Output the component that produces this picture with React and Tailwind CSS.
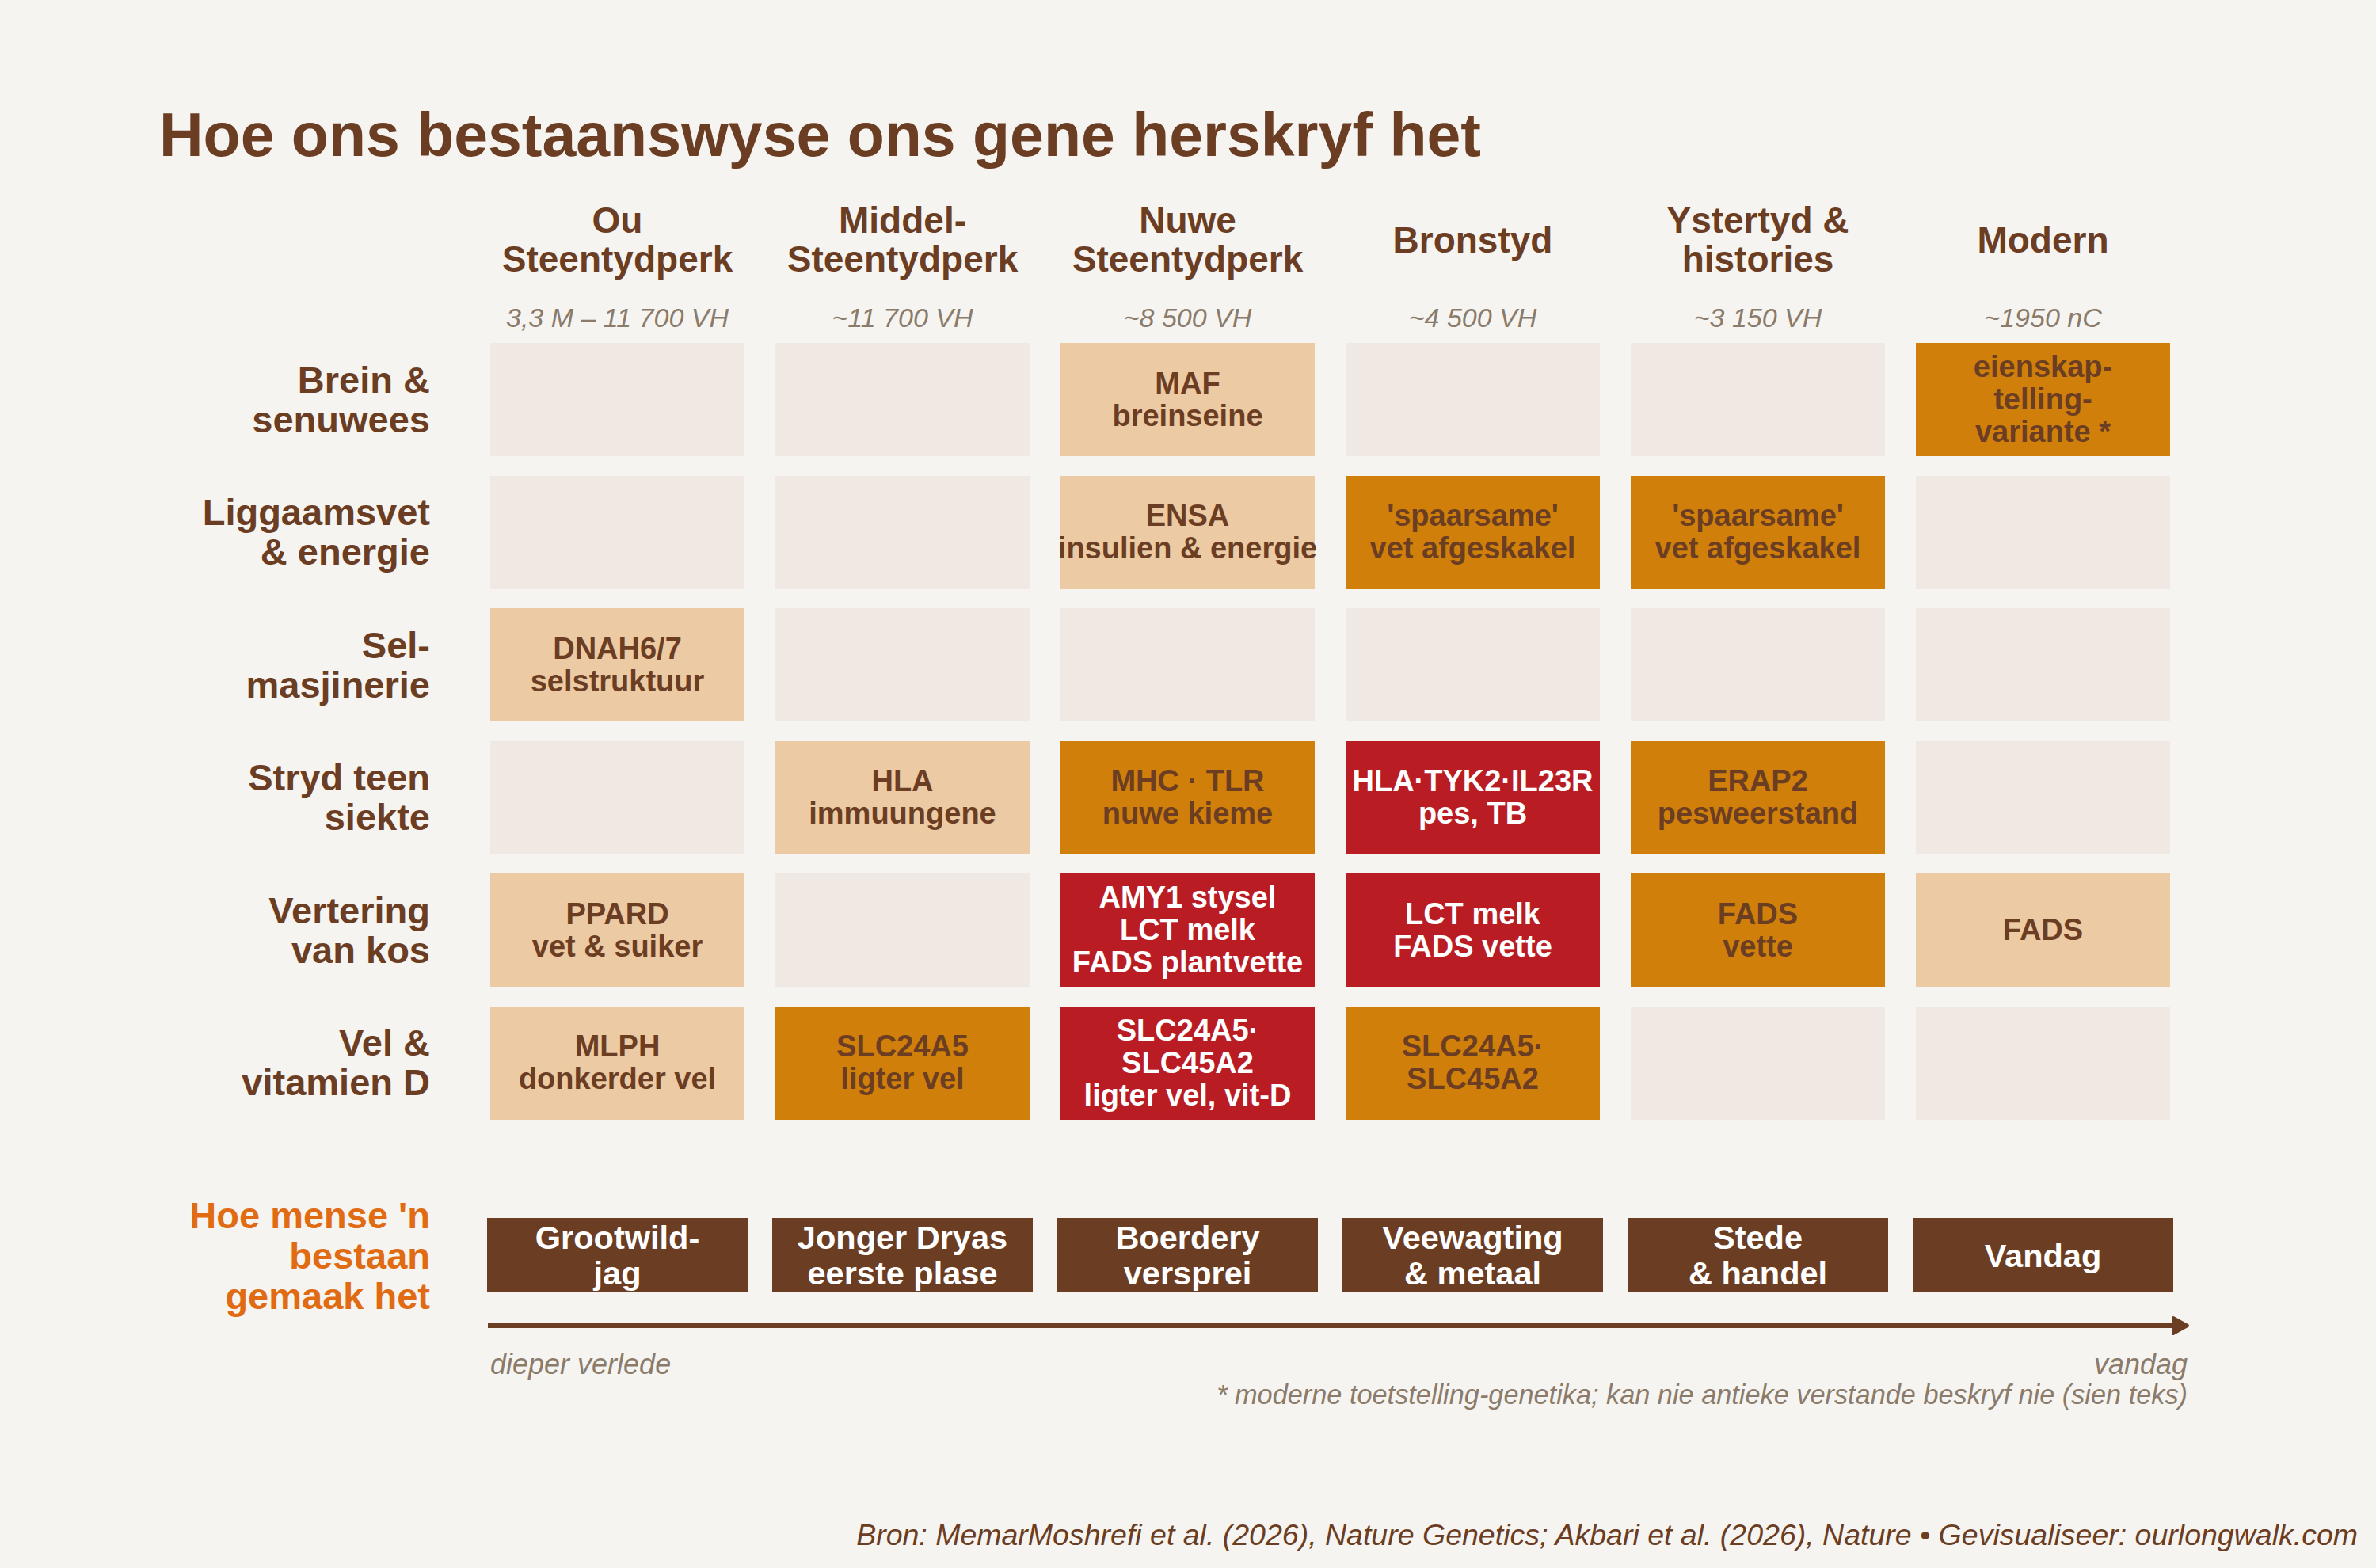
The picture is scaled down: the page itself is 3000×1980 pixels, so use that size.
const eras = [
  { name: 'Ou\nSteentydperk', date: '3,3 M – 11 700 VH' },
  { name: 'Middel-\nSteentydperk', date: '~11 700 VH' },
  { name: 'Nuwe\nSteentydperk', date: '~8 500 VH' },
  { name: 'Bronstyd', date: '~4 500 VH' },
  { name: 'Ystertyd &\nhistories', date: '~3 150 VH' },
  { name: 'Modern', date: '~1950 nC' },
]

// how strong the selection signal was in each period
const tone = {
  none: 'bg-[#f0e8e2]',
  soft: 'bg-[#eccaa4] text-[#6b3d23]',
  mid: 'bg-[#d0800a] text-[#6b3d23]',
  hot: 'bg-[#b91c23] text-white',
}

const rows = [
  {
    label: 'Brein &\nsenuwees',
    cells: [null, null, ['soft', 'MAF\nbreinseine'], null, null, ['mid', 'eienskap-\ntelling-\nvariante *']],
  },
  {
    label: 'Liggaamsvet\n& energie',
    cells: [
      null,
      null,
      ['soft', 'ENSA\ninsulien & energie'],
      ['mid', "'spaarsame'\nvet afgeskakel"],
      ['mid', "'spaarsame'\nvet afgeskakel"],
      null,
    ],
  },
  {
    label: 'Sel-\nmasjinerie',
    cells: [['soft', 'DNAH6/7\nselstruktuur'], null, null, null, null, null],
  },
  {
    label: 'Stryd teen\nsiekte',
    cells: [
      null,
      ['soft', 'HLA\nimmuungene'],
      ['mid', 'MHC · TLR\nnuwe kieme'],
      ['hot', 'HLA·TYK2·IL23R\npes, TB'],
      ['mid', 'ERAP2\npesweerstand'],
      null,
    ],
  },
  {
    label: 'Vertering\nvan kos',
    cells: [
      ['soft', 'PPARD\nvet & suiker'],
      null,
      ['hot', 'AMY1 stysel\nLCT melk\nFADS plantvette'],
      ['hot', 'LCT melk\nFADS vette'],
      ['mid', 'FADS\nvette'],
      ['soft', 'FADS'],
    ],
  },
  {
    label: 'Vel &\nvitamien D',
    cells: [
      ['soft', 'MLPH\ndonkerder vel'],
      ['mid', 'SLC24A5\nligter vel'],
      ['hot', 'SLC24A5·\nSLC45A2\nligter vel, vit-D'],
      ['mid', 'SLC24A5·\nSLC45A2'],
      null,
      null,
    ],
  },
]

const ways = ['Grootwild-\njag', 'Jonger Dryas\neerste plase', 'Boerdery\nversprei', 'Veewagting\n& metaal', 'Stede\n& handel', 'Vandag']

const grid = 'grid grid-cols-[580px_repeat(6,321px)] gap-x-[39px]'

function Cell({ cell }) {
  const [kind, text] = cell || ['none', '']
  return (
    <div
      className={`${tone[kind]} h-[143px] flex items-center justify-center text-center whitespace-pre font-bold text-[38px] leading-[41px]`}
    >
      {text}
    </div>
  )
}

export default function App() {
  return (
    <div className="w-[3000px] h-[1980px] bg-[#f6f4f0] text-[#6b3d23] font-['Liberation_Sans',Arial,sans-serif] flex flex-col">
      <h1 className="pt-[132px] pl-[201px] font-bold text-[77px] leading-[77px]">
        Hoe ons bestaanswyse ons gene herskryf het
      </h1>

      <div className={`${grid} mt-[45px]`}>
        <div />
        {eras.map((e) => (
          <div
            key={e.name}
            className="h-[98px] flex items-center justify-center text-center whitespace-pre font-bold text-[46px] leading-[49px]"
          >
            {e.name}
          </div>
        ))}
      </div>

      <div className={`${grid} mt-[32px]`}>
        <div />
        {eras.map((e) => (
          <div key={e.date} className="text-center italic text-[34px] leading-[34px] text-[#8b7b6b]">
            {e.date}
          </div>
        ))}
      </div>

      <div className={`${grid} gap-y-[24.6px] mt-[15px]`}>
        {rows.map((r) => (
          <div key={r.label} className="contents">
            <div className="pr-[37px] flex items-center justify-end text-right whitespace-pre font-bold text-[47px] leading-[50px]">
              {r.label}
            </div>
            {r.cells.map((c, i) => (
              <Cell key={i} cell={c} />
            ))}
          </div>
        ))}
      </div>

      <div className={`${grid} items-center mt-[95px]`}>
        <div className="pr-[37px] text-right whitespace-pre font-bold text-[47px] leading-[51px] text-[#e06b12]">
          {"Hoe mense 'n\nbestaan\ngemaak het"}
        </div>
        {ways.map((w) => (
          <div
            key={w}
            className="-mx-[4px] h-[94px] bg-[#6b3d23] text-white flex items-center justify-center text-center whitespace-pre font-bold text-[41.5px] leading-[45px]"
          >
            {w}
          </div>
        ))}
      </div>

      <div className={grid}>
        <div className="col-start-2 col-span-6 -ml-[3px] -mr-[24px] h-[24px] flex items-center">
          <div className="flex-1 h-[6px] bg-[#6b3d23]" />
          <svg viewBox="0 0 22 24" className="w-[22px] h-[24px] -ml-[3px] shrink-0">
            <path d="M2 2 L20 12 L2 22 Z" fill="#6b3d23" stroke="#6b3d23" strokeWidth="4" strokeLinejoin="round" />
          </svg>
        </div>
      </div>

      <div className={`${grid} mt-[18px]`}>
        <div className="col-start-2 col-span-6 -mr-[22px] italic leading-[38px] text-[#8b7b6b]">
          <div className="flex justify-between text-[36px]">
            <span>dieper verlede</span>
            <span>vandag</span>
          </div>
          <div className="text-right text-[34.3px]">
            * moderne toetstelling-genetika; kan nie antieke verstande beskryf nie (sien teks)
          </div>
        </div>
      </div>

      <p className="mt-[140px] pr-[23px] text-right italic text-[37.5px] leading-[36px]">
        Bron: MemarMoshrefi et al. (2026), Nature Genetics; Akbari et al. (2026), Nature • Gevisualiseer: ourlongwalk.com
      </p>
    </div>
  )
}
